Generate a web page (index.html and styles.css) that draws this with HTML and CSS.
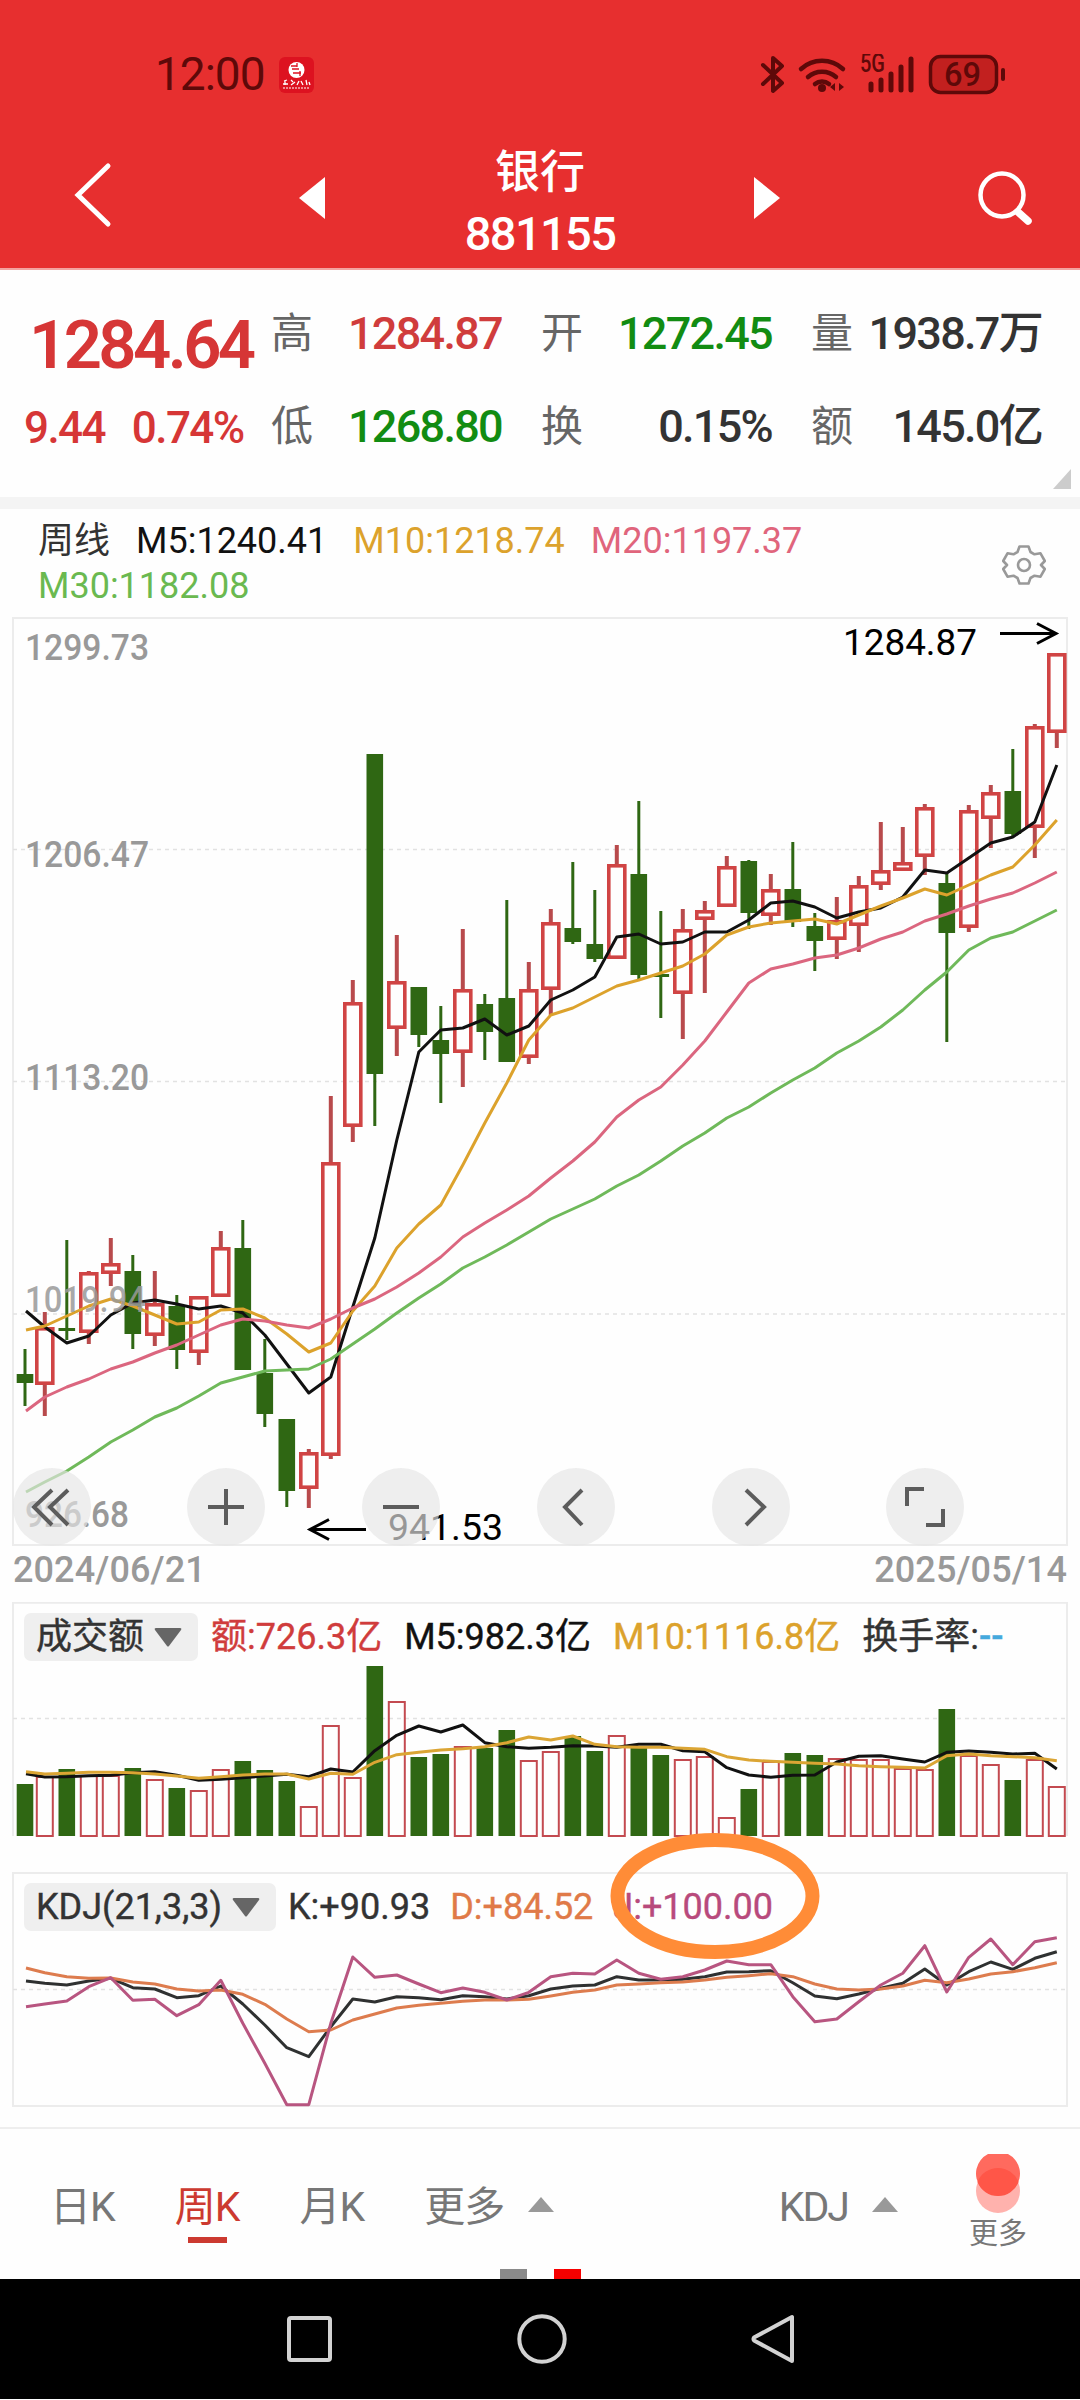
FILE: index.html
```html
<!DOCTYPE html>
<html lang="zh-CN">
<head>
<meta charset="utf-8">
<title>银行 881155</title>
<link rel="stylesheet" href="styles.css">
</head>
<body>
<div class="phone">
  <header class="top">
    <div class="status">
      <span class="clock">12:00</span>
      <svg class="app-badge" width="35" height="36" viewBox="0 0 35 36">
        <rect width="35" height="36" rx="6" fill="#dd1220"/>
        <circle cx="17.500" cy="13" r="8" fill="#fff"/>
        <path d="M12 9h6M20 12h-7M14 16h8M18 6v4M21 14v5" stroke="#dd1220" stroke-width="1.300"/>
        <path d="M5 24l3-1M4 27h5M6 24v4M12 23l2 2M12 28l4-3M20 24l-2 4M22 24l2 4M27 23l1 5M30 25l1 3" stroke="#fff" stroke-width="1.300"/>
        <path d="M4 31h27" stroke="#fff" stroke-width="1" stroke-dasharray="2 1"/>
      </svg>
      <span class="spacer"></span>
      <svg class="status-icons" width="246" height="42" viewBox="760 53 246 42">
        <g fill="none" stroke="#5e0909" stroke-width="4" stroke-linecap="round" stroke-linejoin="round">
          <path d="M763 64l19 18-9 8V57l9 8-19 18"/>
          <path d="M801 68a31 31 0 0 1 42 0M808 76a21 21 0 0 1 28 0M815 83a11 11 0 0 1 14 0" stroke-width="4.500"/>
          <path d="M871 83v6M881 79v10M891 73v16M901 66v23M911 58v31" stroke-width="5"/>
          <rect x="930.500" y="55.500" width="66" height="36" rx="10" fill="#c2201f" stroke-width="3.500"/>
          <path d="M1003 69v9" stroke-width="4"/>
        </g>
        <circle cx="822" cy="87" r="4" fill="#5e0909"/>
        <path d="M835 82v8l-5-4zM839 82v8l5-4z" fill="#5e0909"/>
        <text x="860" y="71" class="net" textLength="25" lengthAdjust="spacingAndGlyphs">5G</text>
        <text x="944" y="85" class="batt" textLength="37" lengthAdjust="spacingAndGlyphs">69</text>
      </svg>
    </div>
    <nav class="titlebar">
      <svg class="back" width="40" height="68" viewBox="0 0 40 68"><path d="M35 5L5 34l30 29" fill="none" stroke="#fff" stroke-width="5" stroke-linecap="round"/></svg>
      <svg width="28" height="42" viewBox="0 0 28 42"><path d="M27 0v42L1 21z" fill="#fff"/></svg>
      <h1 class="title"><span class="name">银行</span><span class="code">881155</span></h1>
      <svg width="28" height="42" viewBox="0 0 28 42"><path d="M1 0v42l26-21z" fill="#fff"/></svg>
      <svg class="search" width="56" height="56" viewBox="0 0 56 56"><circle cx="25" cy="25" r="21.500" fill="none" stroke="#fff" stroke-width="4.500"/><path d="M41 42l10 9" stroke="#fff" stroke-width="7.500" stroke-linecap="round"/></svg>
    </nav>
  </header>

  <section class="quote">
    <div class="price-col">
      <div class="price">1284.64</div>
      <div class="change"><span>9.44</span><span>0.74%</span></div>
    </div>
    <dl class="stats">
      <div><dt>高</dt><dd class="up">1284.87</dd></div>
      <div><dt>开</dt><dd class="down">1272.45</dd></div>
      <div><dt>量</dt><dd>1938.7万</dd></div>
      <div><dt>低</dt><dd class="down">1268.80</dd></div>
      <div><dt>换</dt><dd>0.15%</dd></div>
      <div><dt>额</dt><dd>145.0亿</dd></div>
    </dl>
    <svg class="corner" width="18" height="20" viewBox="0 0 18 20"><path d="M18 0v20H0z" fill="#ccc"/></svg>
  </section>

  <section class="ma">
    <div class="ma-list">
      <span class="ink">周线</span><span class="black">M5:1240.41</span><span class="gold">M10:1218.74</span><span class="pink">M20:1197.37</span><span class="green">M30:1182.08</span>
    </div>
    <svg class="gear" width="44" height="44" viewBox="-22 -22 44 44" fill="none" stroke="#999" stroke-width="2.600" stroke-linejoin="round">
      <path d="M-4.500 -18.500h9l2 5.500 4 2.300 6-1 4.300 7.700-3.800 4v0l3.800 4-4.300 7.700-6-1-4 2.300-2 5.500h-9l-2-5.500-4-2.300-6 1-4.300-7.700 3.800-4-3.800-4 4.300-7.700 6 1 4-2.300z"/>
      <circle r="6"/>
    </svg>
  </section>

  <section class="panel main-chart">
    <svg id="candles" width="1080" height="929" viewBox="0 617 1080 929">
      <rect x="13" y="618" width="1054" height="927" class="frame"/>
      <path d="M13 849.500H1067M13 1081.500H1067M13 1314H1067" class="grid"/>
      <g class="axis">
        <text x="25" y="660" textLength="124">1299.73</text>
        <text x="25" y="867" textLength="124">1206.47</text>
        <text x="25" y="1090" textLength="124">1113.20</text>
        <text x="25" y="1527" textLength="104">926.68</text>
      </g>
      <g class="data"></g>
      <g class="axis over"><text x="25" y="1312" textLength="121">1019.94</text></g>
      <g class="mark">
        <text x="843" y="655" textLength="134">1284.87</text>
        <path d="M1000 633.500H1056M1037 623.500L1056 633.500 1037 643.500"/>
        <text x="388" y="1540" textLength="115">941.53</text>
        <path d="M366 1529.500H310M329 1519.500L310 1529.500 329 1539.500"/>
      </g>
    </svg>
    <div class="controls">
      <button><svg viewBox="-39 -39 78 78"><path d="M0 -17L-18 0 0 18M16 -17L-2 0 16 18"/></svg></button>
      <button><svg viewBox="-39 -39 78 78"><path d="M-18 0H18M0 -18V18"/></svg></button>
      <button><svg viewBox="-39 -39 78 78"><path d="M-18 0H18"/></svg></button>
      <button><svg viewBox="-39 -39 78 78"><path d="M6 -17L-11 0 6 18"/></svg></button>
      <button><svg viewBox="-39 -39 78 78"><path d="M-5 -17L13 0 -5 18"/></svg></button>
      <button><svg viewBox="-39 -39 78 78"><path d="M-18 -1V-18H-1M18 2V18H1"/></svg></button>
    </div>
  </section>

  <div class="dates"><span>2024/06/21</span><span>2025/05/14</span></div>

  <section class="panel">
    <svg id="volume" width="1080" height="236" viewBox="0 1602 1080 236">
      <path d="M13 1836V1602.800H1067V1836" class="frame"/>
      <path d="M13 1718.500H1067" class="grid"/>
      <g class="data"></g>
    </svg>
    <div class="legend vol">
      <span class="select">成交额<svg width="28" height="19" viewBox="0 0 28 19"><path d="M2 0h24q2 0 1 2L15 18q-1 1-2 0L1 2Q0 0 2 0z" fill="#666"/></svg></span>
      <span class="up">额:726.3亿</span><span class="black">M5:982.3亿</span><span class="gold">M10:1116.8亿</span><span class="ink">换手率:<b class="dash">--</b></span>
    </div>
  </section>

  <section class="panel kdj">
    <svg id="kdj" width="1080" height="235" viewBox="0 1872 1080 235">
      <rect x="13" y="1873" width="1054" height="233" class="frame"/>
      <path d="M13 1989.500H1067" class="grid"/>
      <g class="data"></g>
    </svg>
    <div class="legend ind">
      <span class="select">KDJ(21,3,3)<svg width="28" height="19" viewBox="0 0 28 19"><path d="M2 0h24q2 0 1 2L15 18q-1 1-2 0L1 2Q0 0 2 0z" fill="#666"/></svg></span>
      <span class="ink k">K:+90.93</span><span class="orange">D:+84.52</span><span class="plum">J:+100.00</span>
    </div>
    <svg class="ring" width="212" height="130" viewBox="0 0 212 130"><ellipse cx="106" cy="65" rx="97.500" ry="56" fill="none" stroke="#ff8c37" stroke-width="14"/></svg>
  </section>

  <footer class="tabs">
    <span class="tab">日K</span>
    <span class="tab active">周K</span>
    <span class="tab">月K</span>
    <span class="tab">更多</span>
    <svg class="tri" width="26" height="15" viewBox="0 0 26 15"><path d="M13 0l13 15H0z" fill="#999"/></svg>
    <span class="spacer"></span>
    <span class="tab ind-name">KDJ</span>
    <svg class="tri" width="26" height="15" viewBox="0 0 26 15"><path d="M13 0l13 15H0z" fill="#999"/></svg>
    <span class="more">
      <svg width="46" height="62" viewBox="0 0 46 62"><circle cx="23" cy="38" r="22" fill="#ffb2ad"/><path d="M13 1H33A22 22 0 1 1 13 1z" fill="#ff6a5e"/><path d="M2.500 29A22 22 0 0 1 43.500 29 22 22 0 0 1 2.500 29z" fill="#ff5648"/></svg>
      <span>更多</span>
    </span>
  </footer>
  <div class="pager"><i></i><i class="on"></i></div>

  <div class="sysnav">
    <svg width="48" height="52" viewBox="0 0 48 52"><rect x="4" y="5" width="41" height="42" rx="2" fill="none" stroke="#d2d2d2" stroke-width="4"/></svg>
    <svg width="52" height="52" viewBox="0 0 52 52"><circle cx="26" cy="26" r="22.700" fill="none" stroke="#d2d2d2" stroke-width="4"/></svg>
    <svg width="46" height="52" viewBox="0 0 46 52"><path d="M42 4V48L4 27.500Q3 26 4 24.500z" fill="none" stroke="#d2d2d2" stroke-width="4" stroke-linejoin="round"/></svg>
  </div>
</div>
<script src="chart.js"></script>
</body>
</html>
```
FILE: styles.css
```css
* { box-sizing: border-box; }
body { margin: 0; background: #fff; }
.phone { width: 1080px; height: 2400px; overflow: hidden; display: flex; flex-direction: column; font-family: Roboto, "Noto Sans CJK SC", sans-serif; color: #333; background: #fefefe; }
.phone > * { flex: none; }
svg { display: block; flex: none; }
.spacer { flex: 1; }

.top { height: 270px; background: #e72f2f; border-bottom: 2px solid #f3a3a0; color: #fff; }
.status { height: 112px; padding: 37px 74px 0 155px; display: flex; align-items: center; height: 112px; color: #5e0909; }
.clock { font-size: 46px; letter-spacing: -1px; line-height: 75px; }
.app-badge { margin-left: 14px; }
.net { font: 500 25px Roboto, sans-serif; fill: #5e0909; }
.batt { font: 500 33px Roboto, sans-serif; fill: #5e0909; }
.titlebar { display: grid; grid-template-columns: 225px 174px 282px 225px 174px; height: 156px; }
.titlebar > svg { align-self: center; margin-top: 14px; }
.titlebar .back { margin: 10px 0 0 73px; }
.titlebar > svg:nth-child(2) { margin-left: 73px; margin-top: 15px; }
.titlebar > svg:nth-child(4) { margin-left: 72px; margin-top: 15px; }
.titlebar .search { margin: 16px 0 0 71px; }
.title { margin: 30px 0 0; display: flex; flex-direction: column; align-items: center; font-weight: 500; }
.name { font-size: 45px; line-height: 62px; }
.code { font-size: 47px; line-height: 60px; letter-spacing: -1.600px; }

.quote { height: 227px; padding-top: 17px; display: flex; position: relative; }
.price-col { width: 271px; color: #d63636; font-weight: 500; }
.price { height: 93px; padding: 23px 0 0 29px; font-size: 67px; line-height: 70px; letter-spacing: -3.600px; font-weight: 600; }
.change { display: flex; gap: 27px; padding: 2px 0 0 24px; font-size: 44px; line-height: 93px; letter-spacing: -1.600px; }
.stats { margin: 0; display: grid; grid-template-columns: repeat(3, 231px); column-gap: 39px; grid-auto-rows: 93px; height: 186px; }
.stats div { display: flex; justify-content: space-between; line-height: 93px; white-space: nowrap; }
dt { font-size: 42px; color: #666; }
dd { margin: 0; font-size: 45px; font-weight: 500; letter-spacing: -1.700px; color: #333; }
.up { color: #d03c3c; }
.down { color: #128c12; }
.corner { position: absolute; right: 9px; bottom: 8px; }

.ma { height: 120px; border-top: 12px solid #f4f4f4; padding: 10px 34px 0 38px; display: flex; justify-content: space-between; }
.ma-list { width: 900px; display: flex; flex-wrap: wrap; column-gap: 26px; font-size: 36px; line-height: 45px; height: 90px; }
.gear { margin-top: 24px; }
.ink { color: #333; } .black { color: #111; } .gold { color: #dca22c; } .pink { color: #e0657c; } .green { color: #6ab950; }
.orange { color: #e07a48; } .plum { color: #b84a7c; }

.panel { display: grid; position: relative; }
.panel > * { grid-area: 1 / 1; }
.frame { fill: none; stroke: #ececec; stroke-width: 2; }
.grid { fill: none; stroke: #e2e2e2; stroke-width: 1.500; stroke-dasharray: 4 4; }
.axis { font: 500 36.500px Roboto, sans-serif; fill: #999; }
.axis.over { fill-opacity: .85; }
.mark { font: 37.500px Roboto, sans-serif; fill: #000; }
.mark path { fill: none; stroke: #000; stroke-width: 3; }
.line { fill: none; stroke-width: 3; stroke-linejoin: round; }
.fill-down { fill: #2f6713; }
.wick-down { stroke: #2f6713; stroke-width: 3; }
.box-up { fill: none; stroke: #d04444; stroke-width: 3.600; }
.wick-up { stroke: #b84a4c; stroke-width: 4; }
.vol-up { fill: none; stroke: #c34a50; stroke-width: 2; }
.controls { align-self: end; display: flex; gap: 96.800px; padding: 0 0 0 12.500px; }
.controls button { width: 78px; height: 78px; padding: 0; border: 0; border-radius: 50%; background: rgba(229, 229, 229, .66); }
.controls path { fill: none; stroke: #5c5c5c; stroke-width: 4; }

.dates { height: 56px; display: flex; justify-content: space-between; padding: 0 13px; font-size: 36px; font-weight: 500; line-height: 49px; color: #999; letter-spacing: .1px; }

.legend { align-self: start; display: flex; align-items: center; height: 48px; margin: 11px 0 0 24px; font-size: 36px; font-weight: 500; line-height: 48px; white-space: nowrap; }
.select { height: 48px; display: flex; align-items: center; background: #efefef; border-radius: 7px; color: #333; padding: 0 16px 0 12px; }
.select svg { margin-left: auto; }
.vol { gap: 22px; }
.vol .select { width: 174px; margin-right: -9px; }
.ind .select { width: 252px; }
.ind { gap: 20px; }
.ind .k { margin-left: -8px; }
.legend > span { font-weight: 400; -webkit-text-stroke: .4px currentColor; }
.dash { color: #45a9dd; font-weight: 500; }
.kdj { margin-top: 34px; }
.ring { position: absolute; left: 609px; top: -41px; }

.tabs { height: 142px; margin-top: 20px; border-top: 2px solid #eee; display: flex; align-items: flex-start; padding: 0 53px 0 50px; font-size: 41px; line-height: 60px; color: #777; }
.tab { margin-top: 48px; margin-right: 60px; letter-spacing: -1px; }
.tab.active { color: #cc3a30; padding-bottom: 6px; background: linear-gradient(#cc3a30, #cc3a30) 50% 100% / 39px 6px no-repeat; }
.tri { margin-top: 68px; }
.tab:nth-child(4) { margin-right: 24px; }
.ind-name { margin-right: 24px; letter-spacing: -2px; }
.more { margin: 24px 0 0 71px; display: flex; flex-direction: column; align-items: center; font-size: 29px; line-height: 38px; }
.pager { height: 10px; display: flex; justify-content: center; gap: 27px; }
.pager i { width: 27px; height: 11px; background: #8a8a8a; }
.pager .on { background: #f60000; }
.sysnav { height: 120px; background: #000; display: flex; align-items: center; padding: 0 284px 0 285px; justify-content: space-between; }
```
FILE: chart.js
```js
// Each series point is a y coordinate in the page's pixel space.
const x = i => (i === 0 ? 25 : 44.8 + 22 * (i - 1));
const lx = i => (i === 0 ? 26 : x(i));

// direction, high, body top, body bottom, low
const candles = `G 1349 1374 1383 1406|R 1312 1327 1385 1416|G 1240 1328 1331 1340|R 1271 1272 1333 1344|R 1238 1263 1274 1286|G 1255 1271 1334 1349|R 1271 1303 1336 1346|G 1295 1306 1350 1369|R 1296 1296 1353 1365|R 1231 1247 1297 1297|G 1220 1248 1370 1370|G 1339 1373 1414 1427|G 1419 1419 1491 1507|R 1449 1452 1489 1508|R 1096 1162 1456 1459|R 980 1002 1127 1142|G 754 754 1074 1126|R 935 981 1029 1056|G 987 987 1035 1047|G 1006 1040 1054 1103|R 929 989 1053 1087|G 994 1004 1032 1060|G 900 998 1062 1062|R 962 989 1058 1064|R 909 922 990 1015|G 862 928 942 944|G 890 944 959 962|R 845 864 959 959|G 801 874 975 979|G 911 974 977 1018|R 909 929 994 1039|R 901 910 920 993|R 856 866 907 907|G 860 861 913 929|R 874 889 916 925|G 842 889 922 927|G 913 926 941 971|R 897 920 940 959|R 876 885 926 952|R 822 870 885 890|R 827 862 871 871|R 804 807 857 875|G 873 883 933 1042|R 805 810 928 932|R 785 792 819 848|G 749 791 834 837|R 724 726 828 858|R 653 653 733 748`
  .split('|').map(r => { const [d, ...v] = r.split(' '); return [d, ...v.map(Number)]; });

const ma = {
  '#111': [1311,1327,1343,1336,1315,1303,1300,1304,1309,1306,1313,1335,1364,1393,1377,1307,1238,1140,1052,1030,1028,1019,1035,1026,1000,990,977,937,934,944,942,932,932,920,903,901,907,918,912,908,897,870,873,858,843,837,822,765],
  '#dca22c': [1330,1326,1316,1306,1299,1306,1315,1324,1322,1310,1309,1318,1334,1352,1343,1311,1286,1248,1224,1205,1165,1123,1083,1040,1015,1008,997,986,980,973,966,954,935,927,923,921,919,924,915,906,898,889,895,885,875,867,845,820],
  '#db667f': [1411,1397,1387,1379,1369,1362,1353,1345,1335,1325,1319,1321,1325,1328,1319,1308,1299,1287,1273,1257,1237,1223,1210,1196,1178,1161,1142,1117,1100,1087,1065,1041,1012,983,969,964,958,955,948,939,932,921,914,906,899,893,883,872],
  '#6fb95a': [1492,1482,1471,1457,1442,1430,1417,1408,1396,1383,1377,1371,1370,1369,1359,1344,1329,1313,1298,1284,1268,1257,1245,1232,1219,1209,1199,1186,1175,1161,1146,1133,1118,1107,1093,1080,1068,1053,1041,1027,1010,990,972,950,938,932,921,910]
};

const volume = [1784,1776,1769,1775,1775,1768,1779,1788,1790,1769,1761,1770,1781,1806,1725,1777,1666,1701,1757,1754,1746,1748,1730,1760,1751,1736,1751,1735,1748,1755,1759,1756,1817,1789,1761,1753,1755,1758,1759,1759,1768,1769,1709,1755,1764,1780,1759,1786];
const from = (base, a) => a.map(v => base + v / 3);
const volumeMa = {
  '#111': from(1590, [551,561,560,557,556,548,545,556,571,568,563,558,553,560,537,546,482,436,408,426,405,458,470,475,472,467,468,472,463,463,482,485,533,555,562,556,555,516,499,497,507,516,487,483,487,492,490,537]),
  '#dba534': from(1590, [545,552,550,547,547,548,552,558,565,560,555,552,552,567,550,553,517,494,487,480,476,470,458,441,450,438,463,470,472,472,475,478,500,510,514,517,520,522,527,530,532,534,497,492,497,500,503,512])
};
const kdj = {
  '#2f3131': from(1860, [363,370,375,363,355,383,387,413,407,378,432,495,563,590,500,417,426,410,413,419,407,410,417,407,387,378,375,350,360,360,358,350,336,335,332,368,408,416,402,385,370,327,375,335,306,328,295,275]),
  '#dd7c4e': from(1860, [324,338,350,355,354,366,372,387,393,390,403,433,477,515,510,480,462,444,436,430,424,420,420,418,408,397,390,375,372,368,366,360,352,347,341,350,372,387,390,387,378,361,368,357,342,335,323,308]),
  '#b85580': from(1860, [440,432,423,380,353,421,418,467,434,361,490,610,734,734,490,291,352,345,372,398,384,397,420,397,350,340,342,300,340,358,350,330,303,314,314,410,485,477,425,375,340,257,396,292,237,314,245,233])
};

const lines = set => Object.entries(set).map(([c, ys]) =>
  `<polyline class="line" stroke="${c}" points="${ys.map((y, i) => lx(i) + ',' + y.toFixed(1)).join(' ')}"/>`).join('');
const put = (id, html) => { document.querySelector('#' + id + ' .data').innerHTML = html; };

put('candles', candles.map(([d, hi, t, b, lo], i) => {
  const c = x(i);
  return d === 'G'
    ? `<path class="wick-down" d="M${c} ${hi}V${lo}"/><rect class="fill-down" x="${c - 8.3}" y="${t}" width="16.600" height="${b - t}"/>`
    : `<path class="wick-up" d="M${c} ${hi}V${t + 1}M${c} ${b - 1}V${lo}"/><rect class="box-up" x="${c - 8}" y="${t + 1.8}" width="16" height="${b - t - 3.6}"/>`;
}).join('') + lines(ma));

put('volume', volume.map((t, i) => candles[i][0] === 'G'
  ? `<rect class="fill-down" x="${x(i) - 8.3}" y="${t}" width="16.600" height="${1836 - t}"/>`
  : `<rect class="vol-up" x="${x(i) - 8}" y="${t + 1}" width="16" height="${1835 - t}"/>`).join('') + lines(volumeMa));

put('kdj', lines(kdj));

document.querySelectorAll('text[textLength]').forEach(t => t.setAttribute('lengthAdjust', 'spacingAndGlyphs'));
```
